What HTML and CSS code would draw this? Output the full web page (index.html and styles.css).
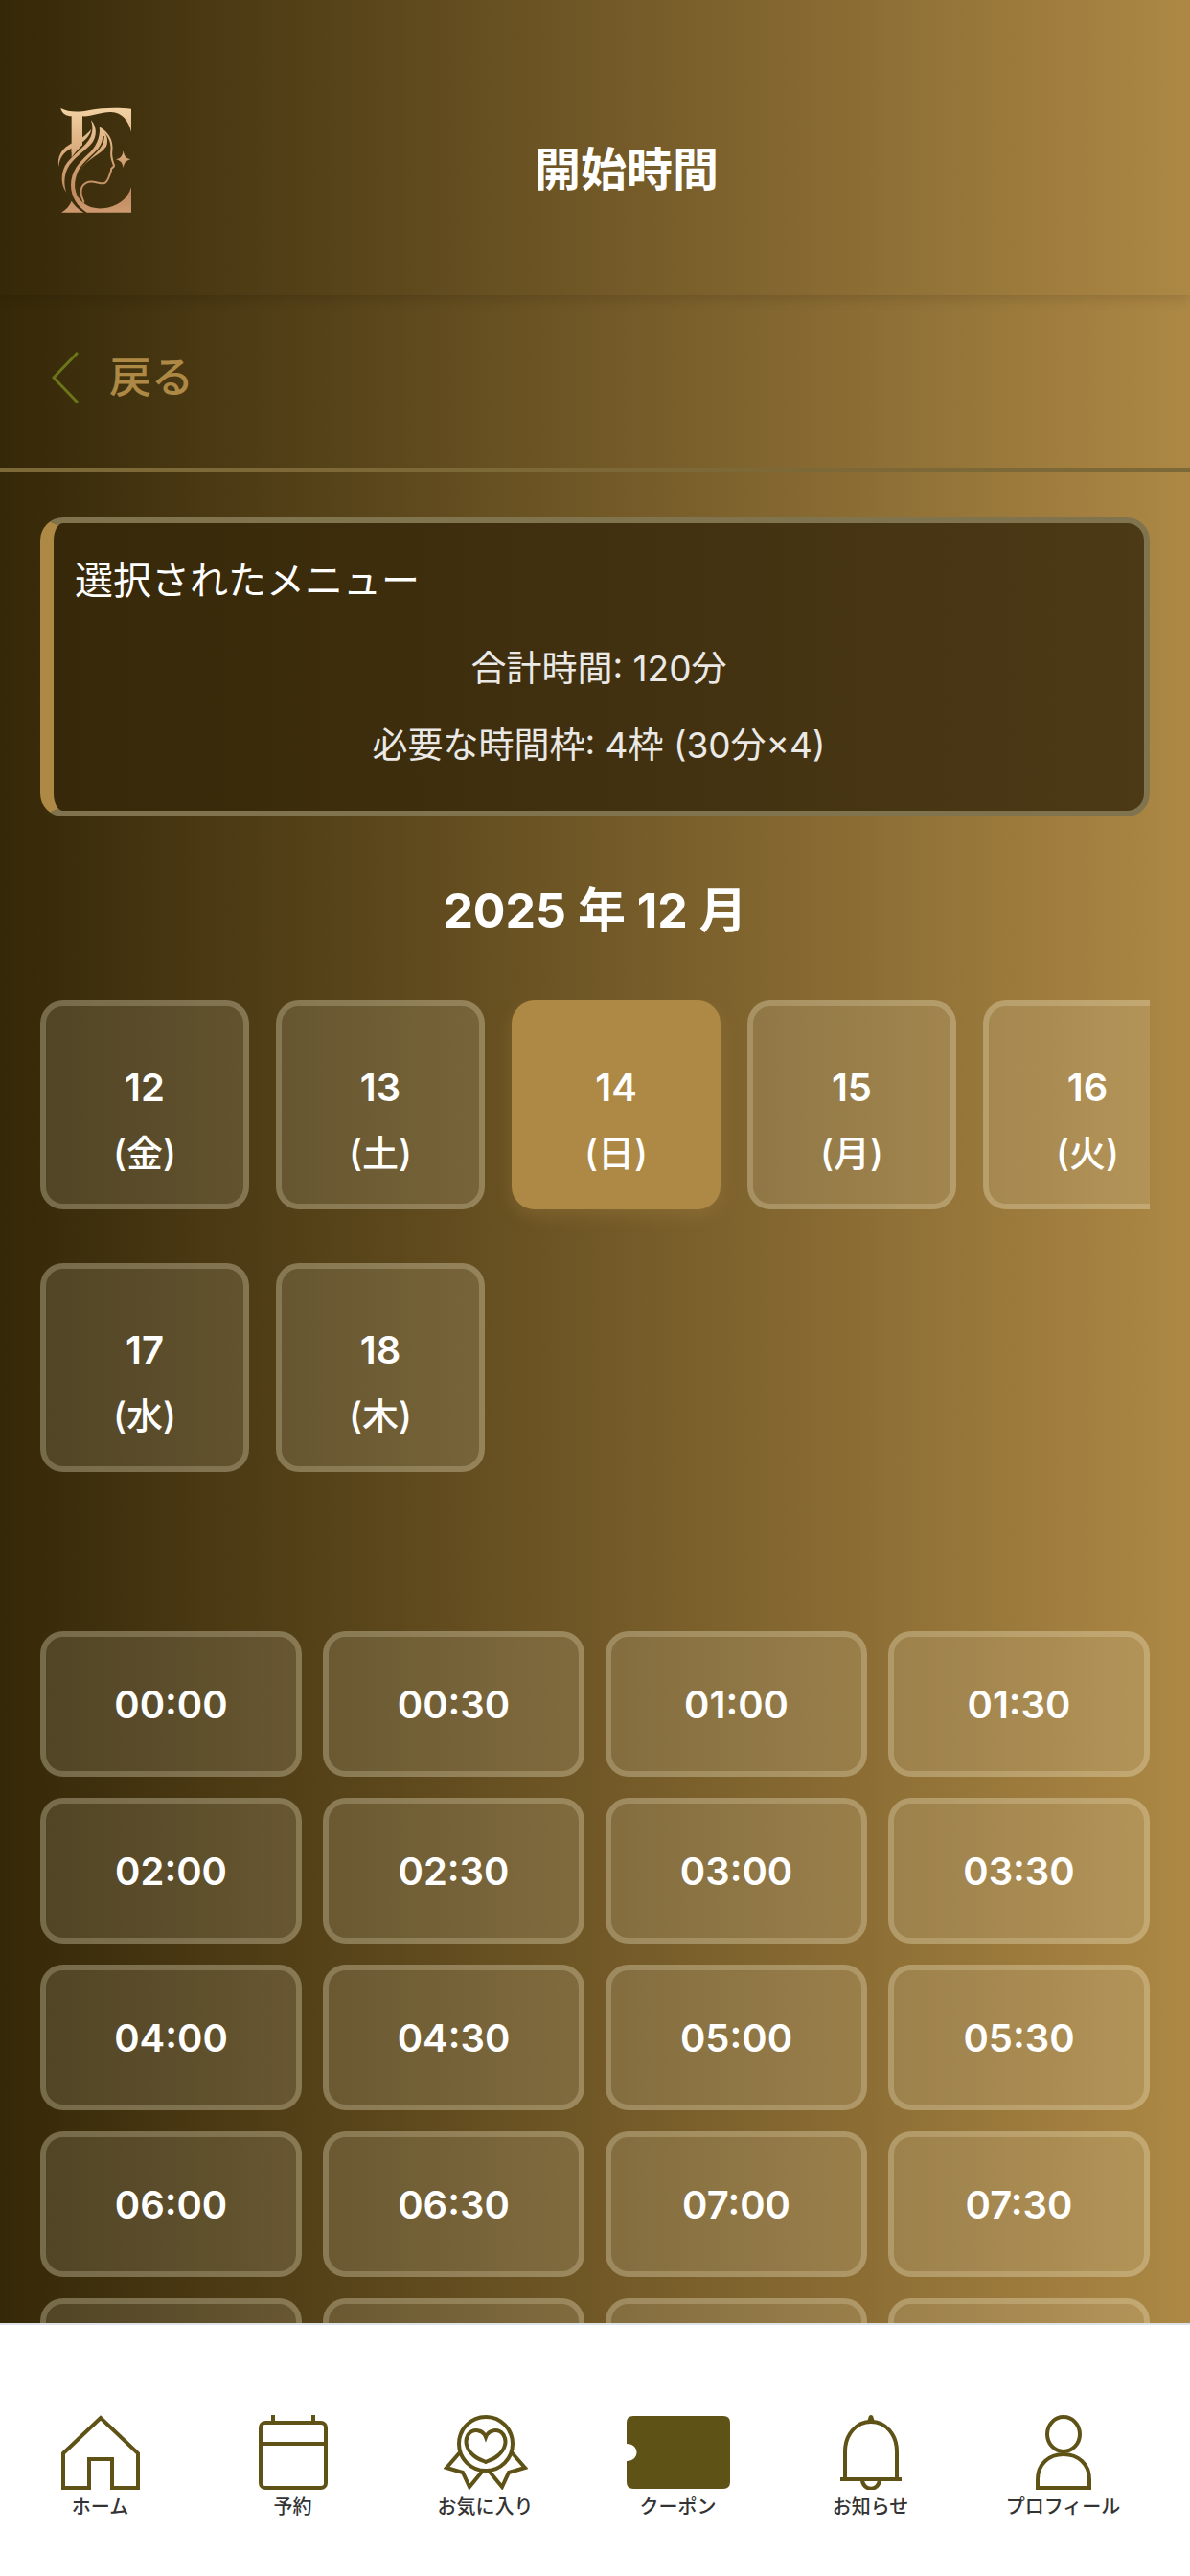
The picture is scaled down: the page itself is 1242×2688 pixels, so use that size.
FILE: index.html
```html
<!DOCTYPE html>
<html lang="ja">
<head>
    <meta charset="UTF-8" />
    <meta name="viewport" content="width=device-width, initial-scale=1" />
    <title>開始時間</title>
    <link rel="stylesheet" href="styles.css">
</head>
<body>
<div class="app">
    <header class="header">
        <svg class="logo" viewBox="60 68 234 390" aria-hidden="true">
            <defs>
                <linearGradient id="gold" gradientUnits="userSpaceOnUse" x1="0" y1="68" x2="0" y2="400">
                    <stop offset="0" stop-color="#f3d2a4" />
                    <stop offset="0.5" stop-color="#d3a273" />
                    <stop offset="0.8" stop-color="#c08a60" />
                    <stop offset="1" stop-color="#d09a70" />
                </linearGradient>
            </defs>
            <g fill="url(#gold)">
                <!-- top serif and stem -->
                <path d="M70 71 C95 84 125 84 160 77 C200 69 250 68 291 73 L291 146 C284 112 262 84 228 83 C195 82 165 98 138 96 L138 172 L104 210 L104 96 C88 96 74 88 70 71 Z" />
                <path d="M104 198 L138 166 L138 186 C124 200 112 212 104 226 Z" />
                <!-- foot and bottom sweep -->
                <path d="M72 397 C88 388 98 376 104 361 C112 374 124 386 142 397 Z" />
                <path d="M152 397 C124 380 102 350 102 312 C102 268 128 240 156 214 C178 194 194 166 192 130 C212 146 222 168 213 190 C196 214 162 226 140 252 C112 286 106 322 128 354 C148 380 176 386 204 384 C246 380 280 356 291 318 L291 397 Z" />
                <path d="M165 108 C184 130 184 158 168 180 C146 206 108 226 90 262 C80 286 80 312 88 334 C70 312 70 276 84 250 C104 218 150 190 164 160 C171 144 171 126 165 108 Z" />
                <path d="M64 254 C58 222 74 196 102 182 C128 170 152 154 166 136 C160 168 128 184 104 196 C80 208 66 224 64 254 Z" />
                <path d="M266 204 C269 221 274 228 289 231 C274 235 269 241 266 258 C263 241 258 235 243 231 C258 228 263 221 266 204 Z" />
            </g>
            <g fill="none" stroke="#42330f" stroke-width="5">
                <path d="M204 158 C205 200 160 220 134 256 C112 288 114 326 128 350" />
            </g>
            <g fill="none" stroke="url(#gold)" stroke-width="6" stroke-linejoin="round" stroke-linecap="round">
                <path d="M194 134 C222 152 232 176 229 204 C226 222 230 230 237 250 C238 256 228 257 228 262 C230 268 224 272 224 278 C218 296 212 306 204 306 C186 306 170 296 152 303 C132 312 128 334 142 364" />
            </g>
        </svg>
        <h1 class="header-title">開始時間</h1>
    </header>

    <div class="back-bar">
        <a class="back" href="#">
            <svg class="back-icon" viewBox="0 0 28 54" aria-hidden="true"><path d="M27 1 L2 27 L27 53" /></svg>
            <span>戻る</span>
        </a>
    </div>

    <main class="content">
        <section class="summary">
            <h2 class="summary-title">選択されたメニュー</h2>
            <p>合計時間: 120分</p>
            <p>必要な時間枠: 4枠 (30分×4)</p>
        </section>

        <h2 class="month">2025 年 12 月</h2>

        <div class="days">
            <div class="days-grid">
                <button type="button" class="day">12<span>(金)</span></button>
                <button type="button" class="day">13<span>(土)</span></button>
                <button type="button" class="day selected">14<span>(日)</span></button>
                <button type="button" class="day">15<span>(月)</span></button>
                <button type="button" class="day">16<span>(火)</span></button>
                <button type="button" class="day">17<span>(水)</span></button>
                <button type="button" class="day">18<span>(木)</span></button>
            </div>
        </div>

        <div class="times">
            <button type="button" class="time">00:00</button>
            <button type="button" class="time">00:30</button>
            <button type="button" class="time">01:00</button>
            <button type="button" class="time">01:30</button>
            <button type="button" class="time">02:00</button>
            <button type="button" class="time">02:30</button>
            <button type="button" class="time">03:00</button>
            <button type="button" class="time">03:30</button>
            <button type="button" class="time">04:00</button>
            <button type="button" class="time">04:30</button>
            <button type="button" class="time">05:00</button>
            <button type="button" class="time">05:30</button>
            <button type="button" class="time">06:00</button>
            <button type="button" class="time">06:30</button>
            <button type="button" class="time">07:00</button>
            <button type="button" class="time">07:30</button>
            <button type="button" class="time"></button>
            <button type="button" class="time"></button>
            <button type="button" class="time"></button>
            <button type="button" class="time"></button>
        </div>
    </main>

    <nav class="tabs">
        <a class="tab" href="#">
            <svg width="82" height="78" viewBox="0 0 82 78"><path d="M2 40 L41 3 L80 40 V76 H53 V46 H29 V76 H2 Z" /></svg>
            ホーム
        </a>
        <a class="tab" href="#">
            <svg width="72" height="78" viewBox="0 0 72 78"><rect x="2" y="8" width="68" height="68" rx="5" /><path d="M2 30 H70 M15 0 V8 M57 0 V8" /></svg>
            予約
        </a>
        <a class="tab" href="#">
            <svg width="88" height="78" viewBox="0 0 88 78"><circle cx="44" cy="30" r="28" /><path d="M44 23 C41 15 31 14 26 20 C21 27 24 36 31 42 C35 46 40 47 44 49 C48 47 53 46 57 42 C64 36 67 27 62 20 C57 14 47 15 44 23 Z M17 39 L3 55 L20 60 L27 75 L41 58 M71 39 L85 55 L68 60 L61 75 L47 58" /></svg>
            お気に入り
        </a>
        <a class="tab" href="#">
            <svg width="108" height="78" viewBox="0 0 108 78"><path class="solid" d="M7 1 H101 Q108 1 108 8 V70 Q108 77 101 77 H7 Q0 77 0 70 V48 C14 48 14 30 0 30 V8 Q0 1 7 1 Z" /></svg>
            クーポン
        </a>
        <a class="tab" href="#">
            <svg width="66" height="78" viewBox="0 0 66 78"><path d="M6 67 V38 C6 20 18 7 33 7 C48 7 60 20 60 38 V67 M1 67 H65 M24 67 C24 80 42 80 42 67" /><path class="solid" d="M29 7 L31 1 Q33 -1 35 1 L37 7 Z" /></svg>
            お知らせ
        </a>
        <a class="tab" href="#">
            <svg width="58" height="78" viewBox="0 0 58 78"><ellipse cx="29" cy="20" rx="17" ry="18" /><path d="M2 76 V67 C2 51 14 41 29 41 C44 41 56 51 56 67 V76 Z" /></svg>
            プロフィール
        </a>
    </nav>
</div>
</body>
</html>
```
FILE: styles.css
```css
* {box-sizing: border-box; margin: 0; padding: 0;}
body {
    font-family: Inter, "Noto Sans CJK JP", sans-serif;
    color: #fff;
    background-color: #fff;
}
a {color: inherit; text-decoration: none;}
button {font: inherit; color: inherit;}
.app {
    height: 100vh;
    display: flex;
    flex-direction: column;
    background: linear-gradient(to right, #352808, #ad8845);
}
.header {
    display: flex;
    align-items: center;
    padding: 112px 72px 66px 60px;
    box-shadow: 0 4px 12px rgba(0, 0, 0, 0.12);
}
.logo {
    width: 78px;
    height: 130px;
}
.header-title {
    flex: 1;
    text-align: center;
    font-size: 48px;
    line-height: 72px;
    font-weight: 600;
}
.back-bar {
    padding: 46px 54px 54px;
    border-bottom: 4px solid #7d6838;
}
.back {
    display: inline-flex;
    align-items: center;
    gap: 32px;
    font-size: 44px;
    line-height: 80px;
    font-weight: 500;
    color: #ad8945;
}
.back-icon {
    width: 28px;
    height: 54px;
    fill: none;
    stroke: #6b7618;
    stroke-width: 3;
}
.content {
    flex: 1;
    min-height: 0;
    overflow: hidden;
    padding: 48px 42px 0;
}
.summary {
    padding: 20px 22px 28px;
    border: 6px solid #80744f;
    border-left: 14px solid #ad8945;
    border-radius: 24px;
    background: linear-gradient(to right, #362809, #4c3916);
    font-size: 37px;
    line-height: 80px;
    text-align: center;
    color: #ebe9e6;
}
.summary-title {
    margin-bottom: 12px;
    font-size: 40px;
    font-weight: 400;
    text-align: left;
    color: #fff;
}
.month {
    margin: 62px 0 58px;
    text-align: center;
    font-size: 50px;
    line-height: 72px;
    font-weight: 700;
}
.days {overflow: hidden; padding-bottom: 24px;}
.days-grid {
    display: grid;
    grid-template-columns: repeat(5, 218px);
    gap: 56px 28px;
}
.day, .time {
    border: 6px solid rgba(250, 240, 210, 0.22);
    border-radius: 24px;
    background-color: rgba(255, 255, 240, 0.12);
}
.day {
    height: 218px;
    padding-top: 32px;
    font-size: 40px;
    line-height: 68px;
    font-weight: 600;
}
.day span {display: block; font-size: 38px; font-weight: 500;}
.day.selected {
    border-color: #ad8945;
    background-color: #ad8945;
    box-shadow: 0 6px 18px rgba(173, 137, 69, 0.3);
}
.times {
    display: grid;
    grid-template-columns: repeat(4, 1fr);
    gap: 22px;
    padding-top: 142px;
}
.time {
    height: 152px;
    font-size: 40px;
    font-weight: 600;
}
.tabs {
    display: flex;
    height: 264px;
    padding: 94px 32px 0 4px;
    border-top: 2px solid #dde3e6;
    background-color: #fff;
}
.tab {
    flex: 1;
    display: flex;
    flex-direction: column;
    align-items: center;
    font-size: 20px;
    line-height: 36px;
    font-weight: 500;
    color: #333;
}
.tab svg {
    fill: none;
    stroke: #5e5216;
    stroke-width: 4;
}
.tab .solid {fill: #5e5216; stroke: none;}
```
